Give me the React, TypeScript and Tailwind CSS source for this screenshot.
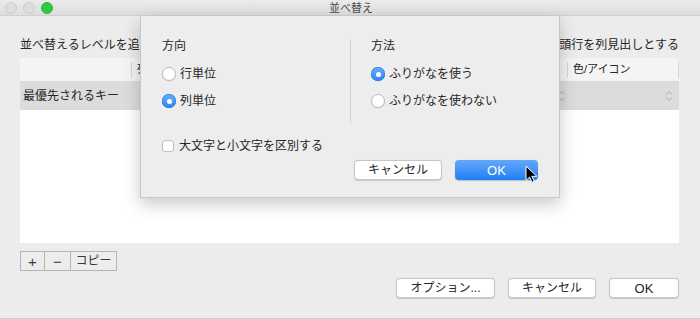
const font = { fontFamily: '"Liberation Sans", "Noto Sans CJK JP", sans-serif' };

function Stepper({ className = "" }: { className?: string }) {
  return (
    <svg width="8" height="12" viewBox="0 0 8 12" fill="none" stroke="#a8a8a8" strokeWidth="1" className={className}>
      <path d="M1 4.5 4 1.5l3 3M1 7.5l3 3 3-3" />
    </svg>
  );
}

function Radio({ on }: { on?: boolean }) {
  return on ? (
    <span className="grid h-[14px] w-[14px] place-items-center rounded-full bg-gradient-to-b from-[#6aaefc] to-[#2b83f6] shadow-[inset_0_0_0_0.5px_#1f6fd8]">
      <span className="h-[5px] w-[5px] rounded-full bg-white" />
    </span>
  ) : (
    <span className="h-[14px] w-[14px] rounded-full border border-[#bdbdbd] bg-white shadow-[0_0.5px_1px_rgba(0,0,0,0.12)]" />
  );
}

function MacButton({ children, className = "" }: { children: React.ReactNode; className?: string }) {
  return (
    <div className={`flex h-[20px] items-center justify-center rounded-[4px] border border-[#c6c6c6] bg-white text-[12px] leading-none text-[#262626] shadow-[0_0.5px_1px_rgba(0,0,0,0.15)] ${className}`}>
      {children}
    </div>
  );
}

export default function App() {
  return (
    <div style={font} className="relative h-[319px] w-[700px] overflow-hidden bg-[#ececec] text-[#262626]">
      {/* title bar */}
      <div className="relative flex h-[16px] items-center border-b border-[#cfcfcf] bg-gradient-to-b from-[#ebebeb] to-[#dedede] px-[5px]">
        <div className="flex gap-[6px]">
          <span className="h-[12px] w-[12px] rounded-full border border-[#cdcdcd] bg-[#dddddd]" />
          <span className="h-[12px] w-[12px] rounded-full border border-[#cdcdcd] bg-[#dddddd]" />
          <span className="h-[12px] w-[12px] rounded-full border border-[#27b53a] bg-[#2fcb45]" />
        </div>
        <span className="absolute left-[329px] top-[1px] text-[11px] leading-[14px] text-[#4a4a4a]">並べ替え</span>
      </div>

      {/* body */}
      <div className="flex flex-col px-[20px] pr-[21px]">
        <div className="flex h-[42px] items-end justify-between pb-[6px] text-[12px] leading-[14px]">
          <span>並べ替えるレベルを追加</span>
          <span className="flex items-center gap-[4px]">
            <span className="h-[12px] w-[12px] rounded-[3px] border border-[#bdbdbd] bg-white" />
            先頭行を列見出しとする
          </span>
        </div>

        <div className="flex h-[185px] flex-col bg-white">
          <div className="flex h-[24px] items-center border-b border-[#dadada] bg-[#f4f4f4] text-[11px] leading-none">
            <div className="h-[16px] w-[112px] border-r border-[#d6d6d6]" />
            <div className="flex h-[16px] flex-1 items-center border-r border-[#d6d6d6] pl-[5px]">列</div>
            <div className="flex h-[16px] w-[111px] items-center border-r border-[#d6d6d6] pl-[5px]">色/アイコン</div>
          </div>
          <div className="flex h-[28px] items-center bg-[#dcdcdc] text-[12px]">
            <span className="w-[112px] pl-[3px]">最優先されるキー</span>
            <div className="flex flex-1 justify-end pr-[2px]">
              <Stepper />
            </div>
            <div className="flex w-[111px] justify-end pr-[6px]">
              <Stepper />
            </div>
          </div>
        </div>

        <div className="mt-[8px] flex h-[20px] w-[97px] border border-[#b5b5b5] bg-[#ededed] leading-none text-[#3a3a3a]">
          <span className="flex w-[24px] items-center justify-center border-r border-[#b5b5b5] text-[15px] font-light">+</span>
          <span className="flex w-[26px] items-center justify-center border-r border-[#b5b5b5] text-[15px] font-light">−</span>
          <span className="flex flex-1 items-center justify-center text-[12px]">コピー</span>
        </div>

        <div className="mt-[7px] flex justify-end gap-[13px]">
          <MacButton className="w-[99px]">オプション...</MacButton>
          <MacButton className="w-[88px]">キャンセル</MacButton>
          <MacButton className="w-[70px] text-[13px]">OK</MacButton>
        </div>
      </div>
      <div className="absolute bottom-0 left-0 h-px w-full bg-[#cfcfcf]" />

      {/* sheet */}
      <div className="absolute left-[140px] top-[16px] flex h-[182px] w-[420px] flex-col border-x border-b border-[#c9c9c9] bg-[#ededed] px-[21px] shadow-[0_6px_16px_rgba(0,0,0,0.22)]">
        <div className="flex pt-[23px]">
          <div className="flex w-[189px] flex-col border-r border-[#d0d0d0] pb-[15px]">
            <span className="text-[12px] leading-[14px]">方向</span>
            <label className="mt-[14px] flex items-center gap-[4px] text-[12px] leading-[14px]">
              <Radio />
              行単位
            </label>
            <label className="mt-[13px] flex items-center gap-[4px] text-[12px] leading-[14px]">
              <Radio on />
              列単位
            </label>
          </div>
          <div className="flex flex-col pl-[20px]">
            <span className="text-[12px] leading-[14px]">方法</span>
            <label className="mt-[14px] flex items-center gap-[4px] text-[12px] leading-[14px]">
              <Radio on />
              ふりがなを使う
            </label>
            <label className="mt-[13px] flex items-center gap-[4px] text-[12px] leading-[14px]">
              <Radio />
              ふりがなを使わない
            </label>
          </div>
        </div>
        <label className="mt-[16px] flex items-center gap-[5px] text-[12px] leading-[14px]">
          <span className="h-[12px] w-[12px] rounded-[3px] border border-[#bdbdbd] bg-white" />
          大文字と小文字を区別する
        </label>
        <div className="mt-[7px] flex justify-end gap-[13px]">
          <MacButton className="w-[88px]">キャンセル</MacButton>
          <div className="flex h-[20px] w-[83px] items-center justify-center rounded-[4px] bg-gradient-to-b from-[#63a8fb] to-[#1b7ff6] text-[13px] leading-none text-white shadow-[0_0.5px_1px_rgba(0,0,0,0.2)]">
            OK
          </div>
        </div>
        <svg className="absolute left-[384px] top-[149px]" width="13" height="19" viewBox="0 0 13 19">
          <path d="M1 1v14.5l3.6-3.4 2.3 5.3 2.3-1-2.3-5.1h5Z" fill="#000" stroke="#fff" strokeWidth="1" strokeLinejoin="round" />
        </svg>
      </div>
    </div>
  );
}
